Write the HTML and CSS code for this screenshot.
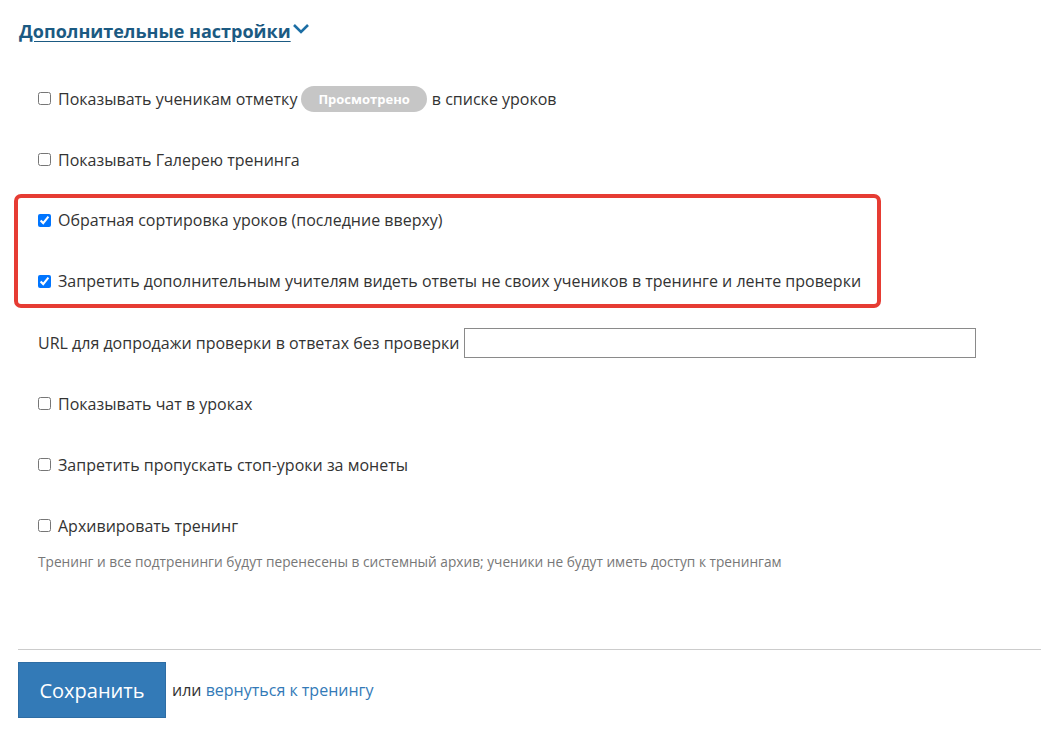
FILE: index.html
```html
<!DOCTYPE html>
<html lang="ru">
<head>
<meta charset="utf-8">
<title>Дополнительные настройки</title>
<link rel="stylesheet" href="styles.css">
</head>
<body>
<div class="page">
  <div class="section-head">
    <a class="section-title" href="#">Дополнительные настройки</a>
    <svg class="chevron" width="18" height="12" viewBox="0 0 18 12"><path d="M2 2 L9 9 L16 2" fill="none" stroke="#1c6ea4" stroke-width="2.6"/></svg>
  </div>

  <div class="options">
    <label class="opt"><input type="checkbox"><span>Показывать ученикам отметку</span><span class="badge">Просмотрено</span><span>в списке уроков</span></label>
    <label class="opt"><input type="checkbox"><span>Показывать Галерею тренинга</span></label>
    <div class="highlight">
      <label class="opt opt-tight"><input type="checkbox" checked><span>Обратная сортировка уроков (последние вверху)</span></label>
      <label class="opt opt-tight"><input type="checkbox" checked><span>Запретить дополнительным учителям видеть ответы не своих учеников в тренинге и ленте проверки</span></label>
    </div>
    <div class="opt opt-url"><span>URL для допродажи проверки в ответах без проверки</span><input class="url-input" type="text"></div>
    <label class="opt"><input type="checkbox"><span>Показывать чат в уроках</span></label>
    <label class="opt"><input type="checkbox"><span>Запретить пропускать стоп-уроки за монеты</span></label>
    <label class="opt"><input type="checkbox"><span>Архивировать тренинг</span></label>
    <p class="help">Тренинг и все подтренинги будут перенесены в системный архив; ученики не будут иметь доступ к тренингам</p>
  </div>

  <div class="footer">
    <button class="btn-save" type="button">Сохранить</button>
    <span class="or">или <a href="#" class="back">вернуться к тренингу</a></span>
  </div>
</div>
</body>
</html>
```

FILE: styles.css
```css
html, body {
  margin: 0;
  padding: 0;
  background: #fff;
}
body {
  font-family: "Open Sans", "Liberation Sans", sans-serif;
  color: #333;
  font-size: 16px;
}
.page {
  padding: 0 0 0 18px;
}
.section-head {
  display: flex;
  align-items: center;
  height: 61px;
  padding-left: 1px;
}
.section-title {
  font-size: 18px;
  font-weight: 700;
  color: #1b5a82;
  text-decoration: underline;
  text-underline-offset: 3px;
}
.chevron {
  margin-left: 1px;
  margin-top: -4px;
}
.options {
  display: flex;
  flex-direction: column;
  padding-top: 7px;
  padding-left: 20px;
}
.opt {
  display: flex;
  align-items: center;
  height: 61px;
  white-space: nowrap;
}
.opt input[type="checkbox"] {
  width: 13px;
  height: 13px;
  margin: 0 7px 0 0;
}
.badge {
  display: inline-flex;
  align-items: center;
  height: 26px;
  padding: 0 17px;
  margin: 0 5px 0 4px;
  border-radius: 13px;
  background: #c6c6c6;
  color: #fff;
  font-size: 13px;
  font-weight: 700;
}
.highlight {
  align-self: flex-start;
  display: flex;
  flex-direction: column;
  gap: 41px;
  margin: 4px 0 4px -24px;
  padding: 12px 16px 13px 20px;
  border: 4px solid #e63c33;
  border-radius: 7px;
}
.opt-tight {
  height: 20px;
}
.opt-url {
  gap: 5px;
}
.url-input {
  flex: 0 0 auto;
  width: 510px;
  height: 28px;
  padding: 0;
  border: 1px solid #8a8a8a;
  box-sizing: content-box;
}
.help {
  margin: -3px 0 0;
  font-size: 13.7px;
  line-height: 18px;
  color: #777;
}
.footer {
  margin-top: 78px;
  border-top: 1px solid #ccc;
  padding-top: 12px;
  display: flex;
  align-items: center;
  gap: 6px;
  padding-bottom: 20px;
}
.btn-save {
  width: 148px;
  height: 56px;
  background: #337ab7;
  border: 1px solid #2e6da4;
  color: #fff;
  font-family: inherit;
  font-size: 20px;
  padding: 0;
}
.or {
  font-size: 16px;
  color: #333;
}
.back {
  color: #337ab7;
  text-decoration: none;
}
```
